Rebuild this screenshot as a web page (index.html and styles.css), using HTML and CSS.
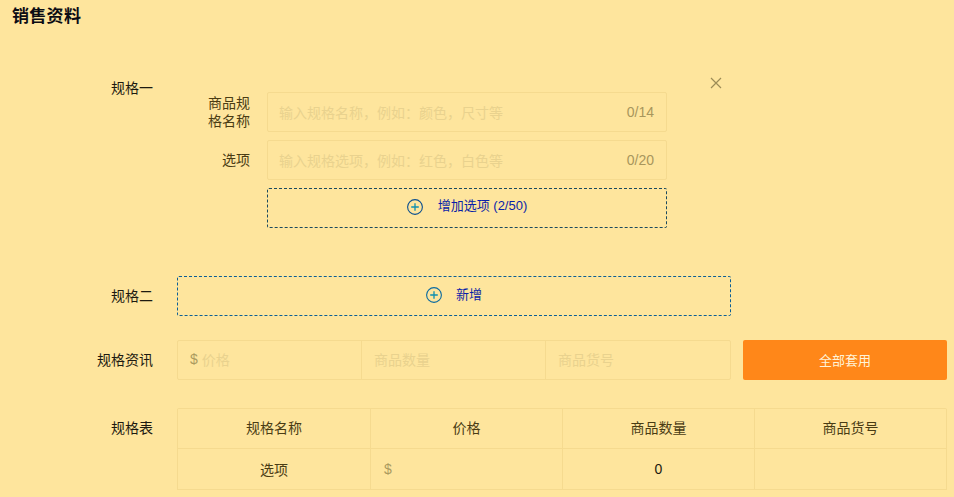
FILE: index.html
```html
<!DOCTYPE html>
<html lang="zh">
<head>
<meta charset="utf-8">
<title>销售资料</title>
<link rel="stylesheet" href="styles.css">
</head>
<body>
<h1 class="title">销售资料</h1>
<section class="row row-one">
  <div class="row-label">规格一</div>
  <div class="spec-card">
    <button class="close" aria-label="关闭">
      <svg width="12" height="12" viewBox="0 0 12 12"><path d="M1 1l10 10M11 1L1 11" fill="none" stroke="#9c8c56" stroke-width="1.2"/></svg>
    </button>
    <div class="field">
      <div class="field-label narrow">商品规格名称</div>
      <div class="input"><span class="ph">输入规格名称，例如：颜色，尺寸等</span><span class="count">0/14</span></div>
    </div>
    <div class="field">
      <div class="field-label">选项</div>
      <div class="input"><span class="ph">输入规格选项，例如：红色，白色等</span><span class="count">0/20</span></div>
    </div>
    <div class="field">
      <div class="field-label"></div>
      <button class="dashed dashed-dark">
        <svg class="plus" width="16" height="16" viewBox="0 0 16 16"><circle cx="8" cy="8" r="7.4" fill="none" stroke="#0b4f8f" stroke-width="1.1"/><path d="M8 4.2v7.6M4.2 8h7.6" stroke="#0e8fb0" stroke-width="1.3" fill="none"/></svg>
        <span class="add-text">增加选项 (2/50)</span>
      </button>
    </div>
  </div>
</section>
<section class="row row-two">
  <div class="row-label">规格二</div>
  <button class="dashed dashed-blue wide">
    <svg class="plus" width="16" height="16" viewBox="0 0 16 16"><circle cx="8" cy="8" r="7.4" fill="none" stroke="#0a6aa0" stroke-width="1.1"/><path d="M8 4.2v7.6M4.2 8h7.6" stroke="#0e8fb0" stroke-width="1.3" fill="none"/></svg>
    <span class="add-text">新增</span>
  </button>
</section>
<section class="row row-info">
  <div class="row-label">规格资讯</div>
  <div class="info">
    <div class="group">
      <div class="cell"><span class="dollar">$</span><span class="ph">价格</span></div>
      <div class="cell"><span class="ph">商品数量</span></div>
      <div class="cell"><span class="ph">商品货号</span></div>
    </div>
    <button class="apply">全部套用</button>
  </div>
</section>
<section class="row row-table">
  <div class="row-label">规格表</div>
  <div class="table">
    <div class="th">规格名称</div>
    <div class="th">价格</div>
    <div class="th">商品数量</div>
    <div class="th">商品货号</div>
    <div class="td">选项</div>
    <div class="td td-left"><span class="dollar">$</span></div>
    <div class="td td-num">0</div>
    <div class="td"></div>
  </div>
</section>
</body>
</html>
```
FILE: styles.css
```css
* { box-sizing: border-box; }
html, body { height: 100%; }
body {
  margin: 0;
  overflow: hidden;
  background: #fee59d;
  color: #3a2f10;
  font-family: "Liberation Sans", "Noto Sans CJK SC", sans-serif;
  font-size: 14px;
}
.title {
  margin: 0;
  padding: 7px 12px 0;
  height: 72px;
  font-size: 17px;
  letter-spacing: .3px;
  line-height: 20px;
  font-weight: 700;
  color: #0c0c14;
}
.row {
  display: grid;
  grid-template-columns: 153px 1fr;
  column-gap: 24px;
  padding-right: 7px;
}
.row-label {
  text-align: right;
  line-height: 32px;
  color: #1d1a10;
}
.row-one { height: 204px; }
.row-two { height: 64px; }
.row-two .row-label { line-height: 40px; }
.row-info { height: 68px; }
.row-info .row-label { line-height: 40px; }
.row-table .row-label { line-height: 40px; }
.spec-card {
  position: relative;
  width: 554px;
  padding-top: 20px;
  display: flex;
  flex-direction: column;
  gap: 8px;
}
.close {
  position: absolute;
  top: 5px;
  right: 9px;
  width: 12px;
  height: 12px;
  padding: 0;
  border: 0;
  background: none;
  display: flex;
}
.field {
  display: flex;
  gap: 17px;
}
.field-label {
  width: 73px;
  flex: none;
  display: flex;
  align-items: center;
  justify-content: flex-end;
  text-align: right;
  line-height: 18px;
  padding-bottom: 1px;
  color: #4a3c14;
}
.field-label.narrow { padding-left: 31px; }
.input {
  width: 400px;
  height: 40px;
  padding: 0 12px 0 11px;
  display: flex;
  align-items: center;
  justify-content: space-between;
  border: 1px solid #f5da8f;
  border-radius: 2px;
}
.ph { color: #e9d28e; }
.count { color: #a8965c; }
.dashed {
  display: flex;
  align-items: center;
  justify-content: center;
  gap: 15px;
  height: 40px;
  padding: 0 0 2px;
  background: none;
  border-radius: 2px;
  font: inherit;
}
.dashed-dark {
  width: 400px;
  border: 1px dashed #1a4a5e;
}
.dashed-blue {
  border: 1px dashed #0c5f96;
}
.dashed.wide { width: 554px; gap: 14px; }
.add-text {
  font-size: 13px;
  line-height: 18px;
  padding-bottom: 2px;
  color: #0a1fa8;
}
.dashed.wide .add-text { padding-bottom: 1px; }
.plus { flex: none; }
.info {
  display: flex;
  gap: 12px;
}
.group {
  width: 554px;
  height: 40px;
  display: grid;
  grid-template-columns: 183px 184px 1fr;
  border: 1px solid #f5da8f;
  border-radius: 2px;
}
.cell {
  display: flex;
  align-items: center;
  gap: 4px;
  padding: 0 12px 2px;
  border-left: 1px solid #f5da8f;
}
.cell:first-child { border-left: 0; }
.dollar { color: #ab9a5f; }
.apply {
  width: 204px;
  height: 40px;
  padding: 0 0 2px;
  border: 0;
  border-radius: 2px;
  background: #ff8719;
  color: #fff4d8;
  font: inherit;
  font-size: 13px;
}
.table {
  display: grid;
  grid-template-columns: 194px 192px 192px 192px;
  grid-template-rows: 40px 41px;
  border-top: 1px solid #f5da8f;
  border-radius: 2px;
}
.th, .td {
  display: flex;
  align-items: center;
  justify-content: center;
  border-right: 1px solid #f5da8f;
  border-bottom: 1px solid #f5da8f;
  color: #4a3c14;
}
.th:nth-child(4n+1), .td:nth-child(4n+1) { border-left: 1px solid #f5da8f; }
.th { padding-bottom: 4px; }
.td-left { justify-content: flex-start; padding-left: 13px; }
.td-num { color: #1d1a10; }
```
